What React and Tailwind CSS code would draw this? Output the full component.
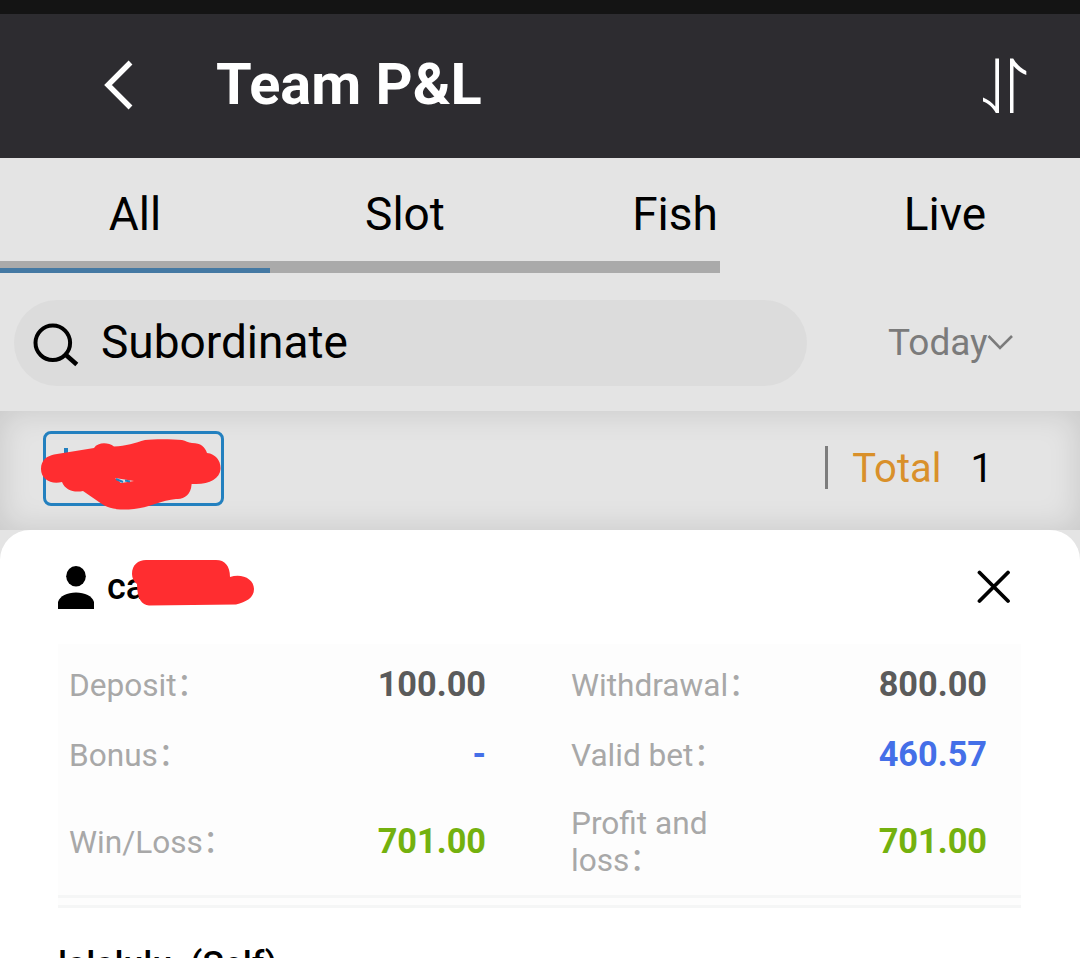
const tabs = ["All", "Slot", "Fish", "Live"];

function Stat({ label, value, tone, inset = "pl-[11px]" }) {
  return (
    <div className={`flex items-center justify-between pr-[34px] ${inset}`}>
      <span className="relative -top-px w-[190px] text-[31.6px] leading-[37px] text-[#a8a8a8]">
        {label}
        <span className="relative -top-px">：</span>
      </span>
      <span className={`relative -top-[2px] text-[34.3px] leading-[37px] font-bold ${tone}`}>{value}</span>
    </div>
  );
}

export default function App() {
  return (
    <div
      className="flex h-[958px] w-[1080px] flex-col overflow-hidden bg-[#e4e4e4] text-black"
      style={{ fontFamily: 'Roboto, "Noto Sans CJK SC", sans-serif' }}
    >
      <div className="h-[14px] shrink-0 bg-[#141414]" />
      <header className="flex h-[144px] shrink-0 items-center bg-[#2d2c30] pb-[4px]">
        <svg className="ml-[100px] h-[60px] w-[40px]" viewBox="0 0 40 60" fill="none" stroke="#fff" strokeWidth="5.4">
          <path d="M30.5 8.500 L8 31 L30.500 53.500" />
        </svg>
        <h1 className="ml-[76px] text-[57.7px] leading-[60px] font-bold text-white">Team P&amp;L</h1>
        <svg className="mr-[50px] ml-auto h-[60px] w-[50px]" viewBox="0 0 50 60" fill="#fff">
          <path d="M15.300 4.500 H19 V59 H15.800 C12.500 53 8.500 49.500 3 47.500 V43.500 C8 45.500 12 48.500 15.300 52.500 Z" />
          <path d="M30 59 V4.500 H33.200 C36.500 10 40.500 14 46.300 17 V21 C41 19 37 16 33.500 12 V59 Z" />
        </svg>
      </header>

      <nav className="h-[115px] shrink-0">
        <div className="flex h-[103px] items-center pt-[8px]">
          {tabs.map((t) => (
            <div key={t} className="w-[270px] text-center text-[46px] leading-[54px]">
              {t}
            </div>
          ))}
        </div>
        <div className="flex h-[12px] w-[720px] items-end bg-[#aaaaaa]">
          <div className="h-[5px] w-[270px] bg-[#4479a3]" />
        </div>
      </nav>

      <div className="flex h-[138px] shrink-0 items-start pt-[27px] pl-[14px]">
        <div className="flex h-[86px] w-[793px] items-center rounded-full bg-[#dcdcdc] pl-[17px]">
          <svg className="h-[50px] w-[50px]" viewBox="0 0 50 50" fill="none" stroke="#000" strokeWidth="4">
            <circle cx="21.800" cy="24.800" r="17.300" />
            <path d="M35 37 L45.800 46.500" strokeWidth="4.500" />
          </svg>
          <span className="relative -top-px ml-[20px] text-[46px] leading-[54px]">Subordinate</span>
        </div>
        <div className="flex h-[86px] items-center pl-[81px] text-[#7b7b7b]">
          <span className="text-[37px] leading-[44px]">Today</span>
          <svg className="-ml-px h-[20px] w-[26px]" viewBox="0 0 26 20" fill="none" stroke="#7b7b7b" strokeWidth="2.6">
            <path d="M1.500 3 L13 15 L25 3" />
          </svg>
        </div>
      </div>

      <div className="flex h-[119px] shrink-0 items-center justify-between pr-[87px] pl-[43px] shadow-[inset_0_0_32px_rgba(0,0,0,0.13)]">
        <div className="relative -top-[2px] h-[75px] w-[181px] rounded-[8px] border-[3px] border-[#2380bf]">
          <svg className="absolute -top-[3px] -left-[3px] h-[82px] w-[184px] overflow-visible" viewBox="43 431 184 82">
            <path d="M66 448 V462" stroke="#2380bf" strokeWidth="4" />
            <path
              d="M41 469 C41 460 47 456 54 454.5 L94 448 C98 442 108 442 114 446.500 C126 446 135 443 145 440 C153 439 172 439 182 440 C186 440.500 188 443 192 443 C201 443 205 447 207 453 C216 454 221 461 220.500 469 C220 478 210 484 196 484 C192 484 191 484 191.500 485 C191 494 184 500 176 499 C163 500 147 508 134 509 C118 510.500 108 509 99 502 L83 491 C74 493 65 490 62 482 C51 485 41 479 41 469 Z"
              fill="#ff2d30"
            />
            <path d="M115 478 L134 481 L121 483 Z" fill="#e4e4e4" />
            <path d="M116 479 L123 482 M125 480.500 L130 481.500" stroke="#2380bf" strokeWidth="2" fill="none" />
          </svg>
        </div>
        <div className="relative -top-[3px] flex items-center text-[40px] leading-[48px]">
          <div className="h-[43px] w-[3px] bg-[#7d7d7d]" />
          <span className="relative top-px ml-[24px] text-[#d9902a]">Total</span>
          <span className="relative top-px ml-[29px]">1</span>
        </div>
      </div>

      <main className="flex h-[430px] shrink-0 flex-col rounded-t-[30px] bg-white px-[58px]">
        <div className="flex h-[114px] shrink-0 items-center justify-between pr-[11px]">
          <div className="relative flex items-center">
            <svg className="h-[44px] w-[36px]" viewBox="0 0 36 44">
              <ellipse cx="18" cy="11.200" rx="9.800" ry="10.200" />
              <path d="M0 44 V37 C2 31 9 27.500 18 27.500 S34 31 36 37 V44 Z" />
            </svg>
            <span className="ml-[13px] text-[36px] leading-[44px] font-medium">ca</span>
            <svg className="absolute top-[-7px] left-[74px] h-[50px] w-[124px]" viewBox="132 558 124 50">
              <path
                d="M132 574 C132 565 138 560 146 560 H216 C225 560 230 566 230 577 C242 573 254 579 254 589 C254 598 246 602 236 604.500 L149 605.500 C142 605 137 599 137 584 C134 582 132 578 132 574 Z"
                fill="#ff2d30"
              />
            </svg>
          </div>
          <svg className="h-[34px] w-[34px]" viewBox="0 0 34 34" fill="none" stroke="#000" strokeWidth="3.8" strokeLinecap="round">
            <path d="M2.500 2.500 L31 31 M31 2.500 L2.500 31" />
          </svg>
        </div>
        <section className="grid h-[251px] w-[963px] shrink-0 grid-cols-[462px_501px] grid-rows-[70px_70px_104px] bg-[#fdfdfd] pt-[7px]">
          <Stat label="Deposit" value="100.00" tone="text-[#5b5b5b]" />
          <Stat label="Withdrawal" value="800.00" tone="text-[#5b5b5b]" inset="pl-[51px]" />
          <Stat label="Bonus" value="-" tone="text-[#446fe8]" />
          <Stat label="Valid bet" value="460.57" tone="text-[#446fe8]" inset="pl-[51px]" />
          <Stat label="Win/Loss" value="701.00" tone="text-[#74b10e]" />
          <Stat label="Profit and loss" value="701.00" tone="text-[#74b10e]" inset="pl-[51px]" />
        </section>
        <div className="h-[13px] w-[963px] shrink-0 border-y-[3px] border-[#f5f6f6] bg-[#fdfdfd]" />
        <div className="mt-[35px] text-[35.6px] leading-[42px] font-medium whitespace-pre">lalalulu  (Self)</div>
      </main>
    </div>
  );
}
